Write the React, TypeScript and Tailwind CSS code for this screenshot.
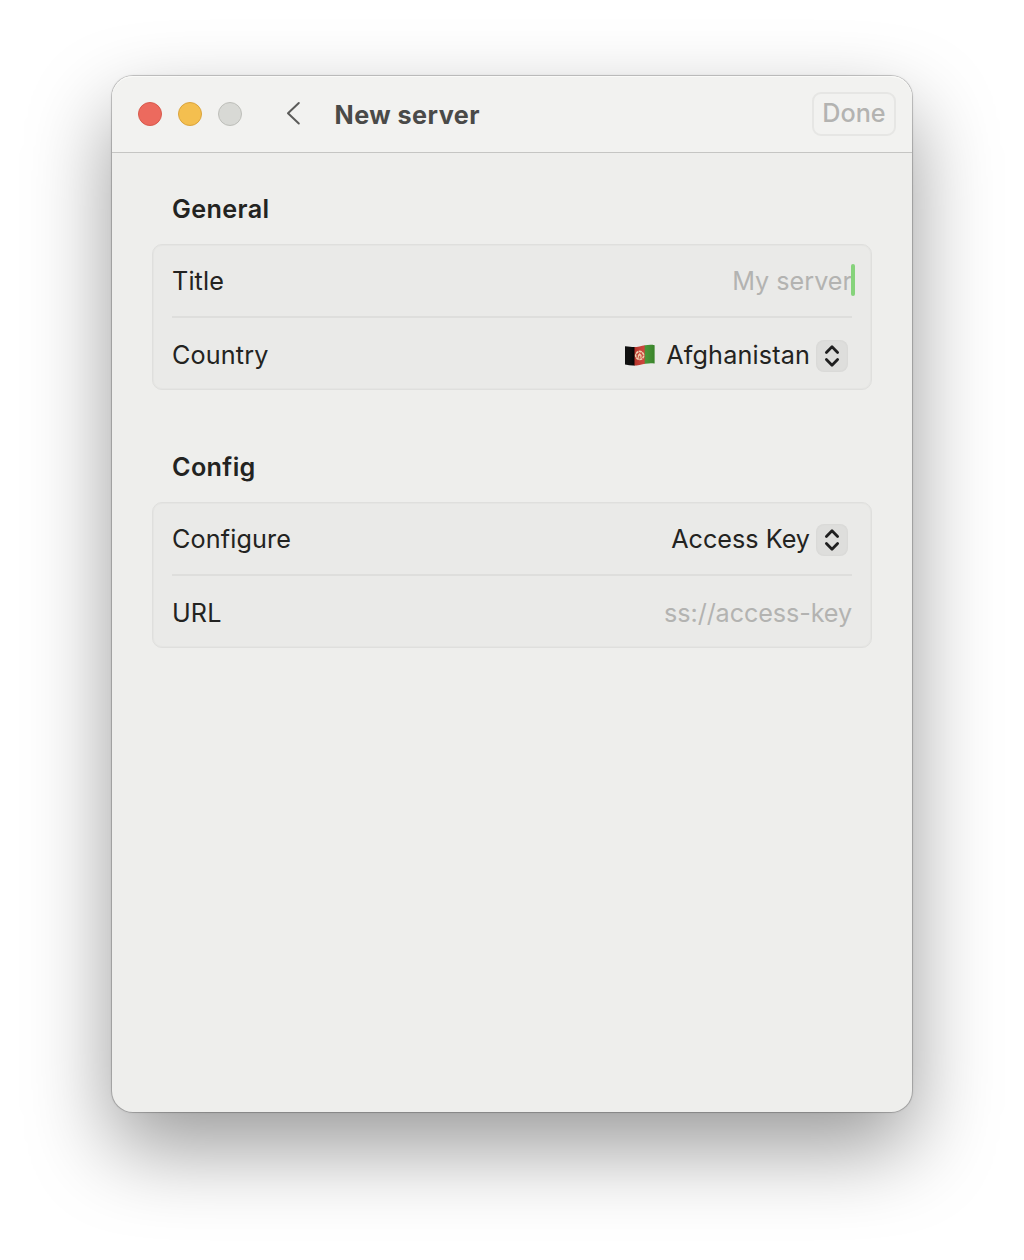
import type { ReactNode } from "react";

function Chevrons() {
  return (
    <span className="flex h-8 w-8 shrink-0 items-center justify-center rounded-[8px] bg-[#dededc] shadow-[inset_0_0_3px_rgba(0,0,0,0.05)]">
      <svg width="32" height="32" viewBox="0 0 32 32" fill="none" stroke="#1f1f1f" strokeWidth="2.8" strokeLinecap="round" strokeLinejoin="round">
        <path d="M10.4 12.4 16 6.8l5.6 5.6M10.4 19.6l5.6 5.6 5.6-5.6" />
      </svg>
    </span>
  );
}

function Flag() {
  return (
    <svg width="32" height="24" viewBox="0 0 32 24" className="-mt-[2px] shrink-0">
      <defs>
        <clipPath id="wave">
          <path d="M1 3.2C7 3.8 10 4.6 15.5 3.5S25 1.3 30.6 2.2V20.6C25 19.7 21 21 15.5 22S6 22.6 1 21.6Z" />
        </clipPath>
        <linearGradient id="shade" x1="0" x2="1">
          <stop offset="0" stopColor="#fff" stopOpacity=".02" />
          <stop offset=".3" stopColor="#000" stopOpacity=".12" />
          <stop offset=".6" stopColor="#fff" stopOpacity=".08" />
          <stop offset="1" stopColor="#000" stopOpacity=".12" />
        </linearGradient>
      </defs>
      <g clipPath="url(#wave)">
        <rect width="11" height="24" fill="#080808" />
        <rect x="10.5" width="10.5" height="24" fill="#c8352b" />
        <rect x="20.7" width="11.3" height="24" fill="#3c902a" />
        <rect width="32" height="24" fill="url(#shade)" />
      </g>
      <circle cx="15.7" cy="12.4" r="4" fill="none" stroke="#ecd0ad" strokeWidth="1.6" strokeDasharray="3 .5" />
      <path d="M13.8 14.8V12l1.9-2 1.9 2v2.8Z" fill="#efc9a4" />
      <path d="M15.7 14.8v-2" stroke="#b23b2b" />
    </svg>
  );
}

function Row({ label, height, children }: { label: string; height: string; children: ReactNode }) {
  return (
    <div className={`flex items-center justify-between pt-[2px] ${height}`}>
      <span className="-mt-[2px] tracking-[0.13px]">{label}</span>
      {children}
    </div>
  );
}

export default function App() {
  return (
    <div className="h-[1260px] w-[1024px] overflow-hidden bg-white px-28 pt-[76px] font-['Inter','Liberation_Sans',sans-serif] text-[25.2px] leading-8 text-[#232321]">
      <main className="h-[1036px] w-[800px] rounded-[21px] bg-[#eeeeec] shadow-[0_0_0_1px_rgba(0,0,0,0.17),0_0_3px_rgba(0,0,0,0.15),0_36px_84px_rgba(0,0,0,0.4)]">
        <header className="flex h-[77px] items-center rounded-t-[21px] border-b border-[#c5c5c3] bg-[#f2f2f0] pl-[26px] pr-4 shadow-[inset_0_1px_0_#fafaf8]">
          <div className="flex gap-4">
            <i className="size-6 rounded-full border border-[#d85a4c] bg-[#ec6a5e]" />
            <i className="size-6 rounded-full border border-[#dba43c] bg-[#f4bf4f]" />
            <i className="size-6 rounded-full border border-[#bebfba] bg-[#d8d9d5]" />
          </div>
          <svg className="ml-[42px]" width="20" height="26" viewBox="0 0 20 26" fill="none" stroke="#5b5b59" strokeWidth="2" strokeLinecap="round" strokeLinejoin="round">
            <path d="M14.8 2 4 12.2 14.8 22.5" />
          </svg>
          <h1 className="ml-[30.5px] pt-[2px] font-bold tracking-[0.45px] text-[#4a4a48]">New server</h1>
          <button className="ml-auto flex h-11 w-[84px] items-center justify-center rounded-[9px] border-2 border-[#e6e6e4] pb-[2px] font-medium text-[#b3b3b1]">
            <span>Done</span>
          </button>
        </header>
        <div className="px-10 pt-[40px]">
          <h2 className="ml-5 font-semibold tracking-[0.38px]">General</h2>
          <section className="mt-[19px] h-[146px] rounded-[10px] border border-[#dfdfdd] bg-[#eaeae8] px-[19px] py-px shadow-[inset_0_0_0_1px_#e5e5e3]">
            <div className="h-[72px] border-b-2 border-[#dededc]">
              <Row label="Title" height="h-[70px]">
                <span className="relative -mt-[2px] text-[#b3b3b1]">
                  <span>My server</span>
                  <i className="absolute -right-[3px] -top-[1px] h-8 w-1 rounded-full bg-[#86d37b]" />
                </span>
              </Row>
            </div>
            <Row label="Country" height="h-[74px]">
              <span className="flex items-center pr-1">
                <Flag />
                <span className="-mt-[2px] ml-[10.5px] mr-[6px] tracking-[0.15px]">Afghanistan</span>
                <Chevrons />
              </span>
            </Row>
          </section>
          <h2 className="ml-5 mt-[61px] font-semibold tracking-[0.35px]">Config</h2>
          <section className="mt-[19px] h-[146px] rounded-[10px] border border-[#dfdfdd] bg-[#eaeae8] px-[19px] py-px shadow-[inset_0_0_0_1px_#e5e5e3]">
            <div className="h-[72px] border-b-2 border-[#dededc]">
              <Row label="Configure" height="h-[70px]">
                <span className="flex items-center pr-1">
                  <span className="-mt-[2px] mr-[6px]">Access Key</span>
                  <Chevrons />
                </span>
              </Row>
            </div>
            <Row label="URL" height="h-[74px]">
              <span className="-mt-[2px] tracking-[-0.1px] text-[#b3b3b1]">ss://access-key</span>
            </Row>
          </section>
        </div>
      </main>
    </div>
  );
}
